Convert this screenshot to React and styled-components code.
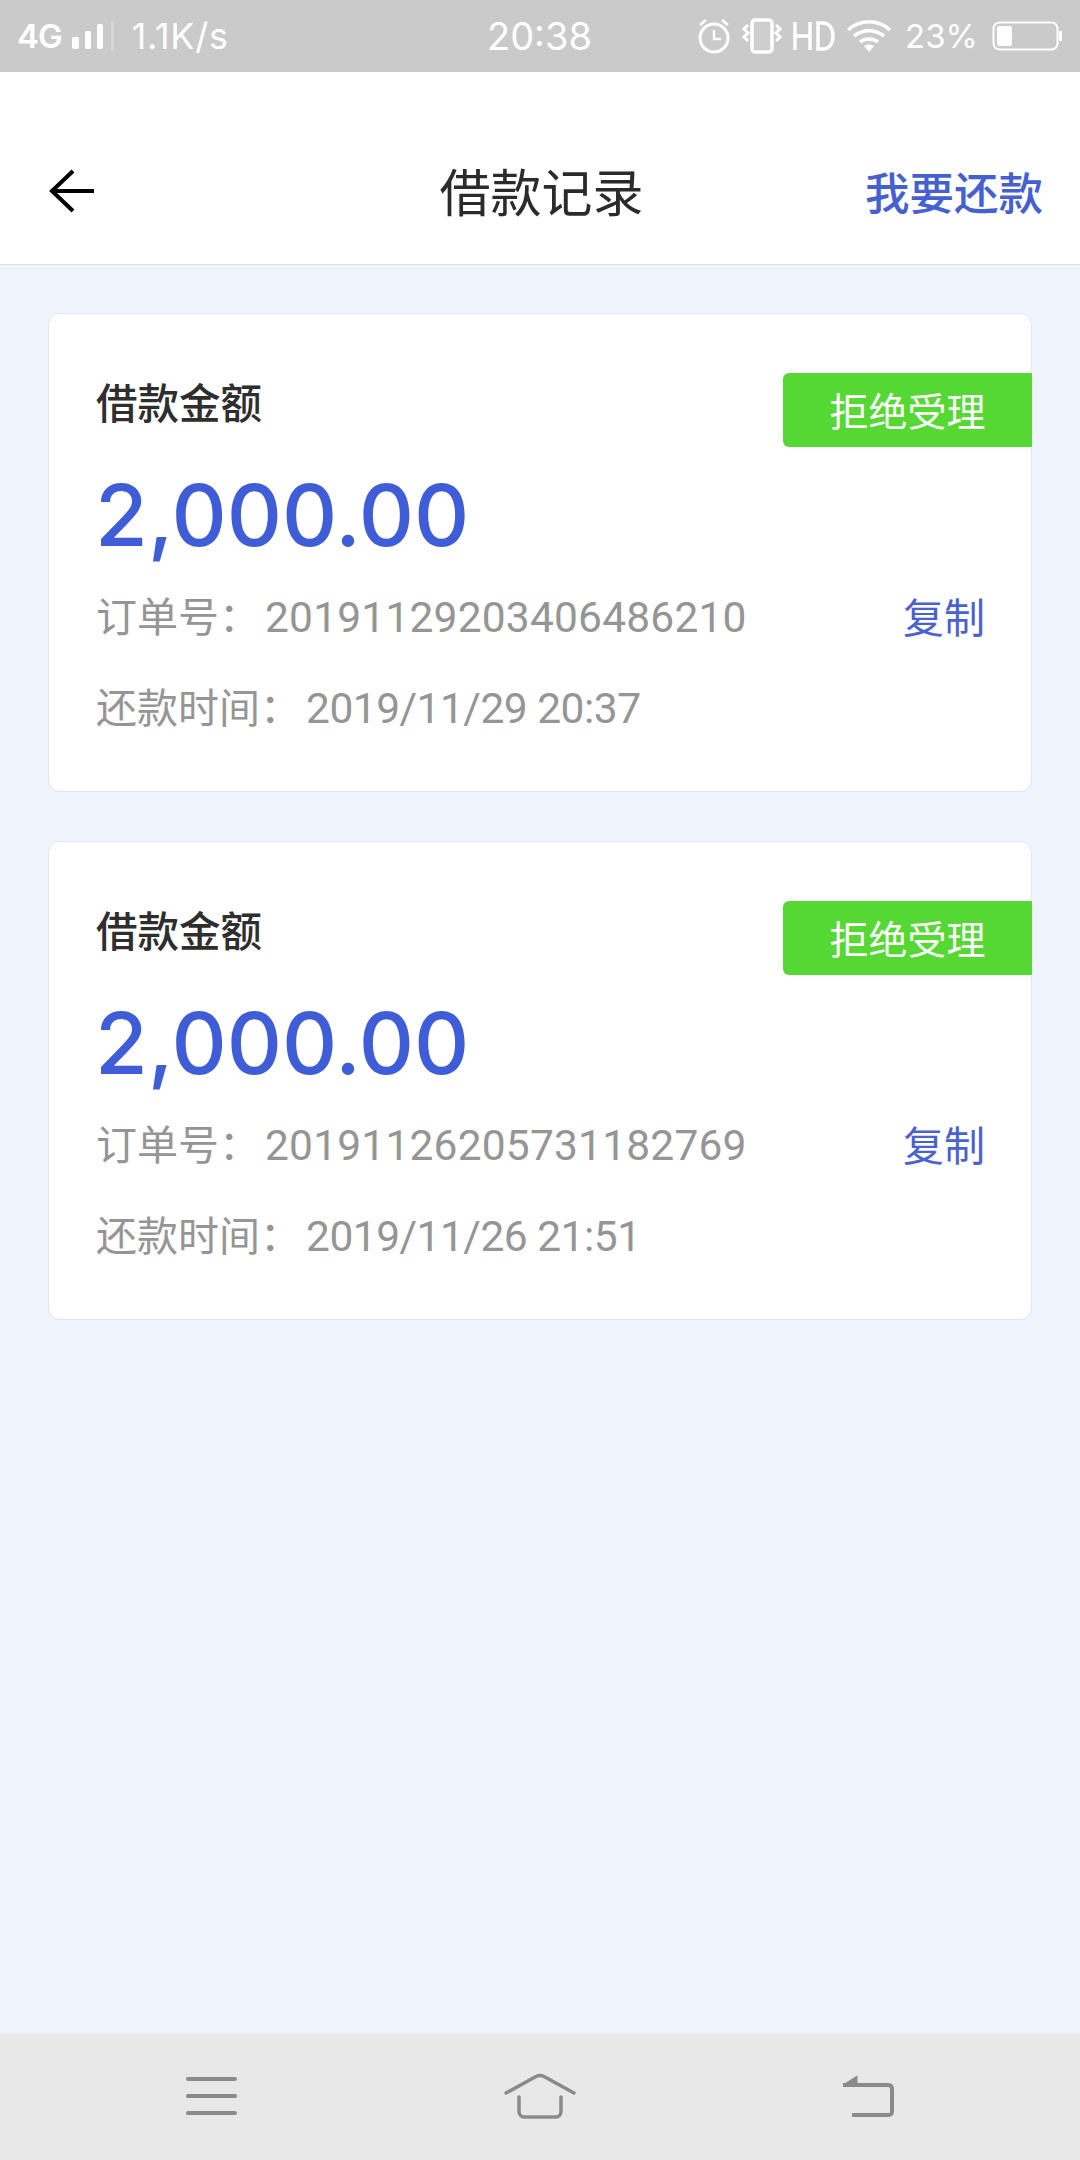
import React from 'react';
import styled, { createGlobalStyle } from 'styled-components';

const GlobalStyle = createGlobalStyle`
	html, body {
		margin: 0;
		padding: 0;
		background: #f0f4fc;
	}
	* {
		box-sizing: border-box;
	}
`;

const Page = styled.div`
	display: flex;
	flex-direction: column;
	width: 1080px;
	height: 2160px;
	overflow: hidden;
	background: #f0f4fc;
	font-family: Inter, 'Noto Sans CJK SC', sans-serif;
`;

const StatusBar = styled.div`
	display: grid;
	grid-template-columns: 1fr auto 1fr;
	align-items: center;
	height: 72px;
	padding: 0 18px 0 17px;
	background: #cacaca;
	color: #fff;
`;

const StatusLeft = styled.div`
	display: flex;
	align-items: center;
`;

const StatusRight = styled.div`
	display: flex;
	align-items: center;
	justify-content: flex-end;
`;

const NetworkType = styled.span`
	font-size: 33px;
	font-weight: 600;
	letter-spacing: -1px;
`;

const NetworkSpeed = styled.span`
	margin-left: 11px;
	font-size: 36px;
	letter-spacing: 0.7px;
`;

const Clock = styled.span`
	font-size: 38px;
`;

const Percent = styled.span`
	margin: 0 14px 0 13px;
	font-size: 33px;
`;

const StatusIcon = styled.svg`
	display: block;
	flex: none;
	margin-left: ${(p) => p.$gap || 0}px;
`;

const NavBar = styled.header`
	display: grid;
	grid-template-columns: 1fr auto 1fr;
	align-items: center;
	height: 193px;
	padding: 44px 37px 0 40px;
	background: #fff;
	border-bottom: 1px solid #dcdfe6;
`;

const BackButton = styled.svg`
	display: block;
	margin: 2px 0 0 9px;
`;

const Title = styled.h1`
	margin: 0;
	font-size: 51px;
	font-weight: 400;
	color: #2b2b2b;
`;

const ActionLink = styled.a`
	justify-self: end;
	font-size: 44.5px;
	font-weight: 500;
	color: #4560d0;
`;

const List = styled.main`
	display: flex;
	flex: 1;
	flex-direction: column;
	gap: 49px;
	padding: 48px 48px 0;
`;

const Card = styled.section`
	position: relative;
	height: 479px;
	padding: 60px 46px 0 47px;
	background: #fff;
	border: 1px solid #e1e5ec;
	border-radius: 12px;
`;

const Badge = styled.div`
	position: absolute;
	top: 59px;
	right: -1px;
	width: 249px;
	height: 74px;
	border-radius: 6px 0 0 6px;
	background: #55d833;
	color: #fff;
	font-size: 39px;
	line-height: 78px;
	text-align: center;
`;

const Label = styled.div`
	font-size: 41.5px;
	font-weight: 500;
	line-height: 60px;
	color: #2e2e2e;
`;

const Amount = styled.div`
	margin: 31px 0 0 -1px;
	font-size: 85.7px;
	font-weight: 500;
	line-height: 100px;
	color: #3f5dd6;
`;

const InfoRow = styled.div`
	display: flex;
	align-items: center;
	justify-content: space-between;
	margin-top: ${(p) => p.$top}px;
	font-size: 41px;
	line-height: 60px;
	color: #959595;
`;

const InfoValue = styled.span`
	margin-left: 5px;
	font-family: Roboto, sans-serif;
	font-size: 42.5px;
	letter-spacing: ${(p) => p.$spacing}px;
`;

const CopyLink = styled.a`
	color: #4a62d0;
	font-size: 41px;
`;

const BottomBar = styled.nav`
	display: flex;
	align-items: center;
	justify-content: space-between;
	height: 127px;
	padding: 0 186px 2px;
	background: #e8e8e8;
`;

const NavIcon = styled.svg`
	display: block;
	fill: none;
	stroke: #8a8a8a;
`;

const records = [
	{ amount: '2,000.00', order: '20191129203406486210', time: '2019/11/29 20:37' },
	{ amount: '2,000.00', order: '20191126205731182769', time: '2019/11/26 21:51' },
];

function Record({ amount, order, time }) {
	return (
		<Card>
			<Badge>拒绝受理</Badge>
			<Label>借款金额</Label>
			<Amount>{amount}</Amount>
			<InfoRow $top={22}>
				<span>
					订单号：<InfoValue $spacing={0.2}>{order}</InfoValue>
				</span>
				<CopyLink>复制</CopyLink>
			</InfoRow>
			<InfoRow $top={30}>
				<span>
					还款时间：<InfoValue $spacing={-0.5}>{time}</InfoValue>
				</span>
			</InfoRow>
		</Card>
	);
}

export default function App() {
	return (
		<Page>
			<GlobalStyle />
			<StatusBar>
				<StatusLeft>
					<NetworkType>4G</NetworkType>
					<StatusIcon $gap={9} width="50" height="30" viewBox="0 0 50 30" fill="#fff">
						<rect x="1" y="16" width="7" height="12" rx="2" />
						<rect x="14" y="10" width="6" height="18" rx="2" />
						<rect x="26" y="3" width="6" height="25" rx="2" />
						<rect x="40" y="0" width="3" height="30" fill="#fff" opacity="0.25" />
					</StatusIcon>
					<NetworkSpeed>1.1K/s</NetworkSpeed>
				</StatusLeft>
				<Clock>20:38</Clock>
				<StatusRight>
					<StatusIcon width="34" height="36" viewBox="0 0 34 36" fill="none" stroke="#fff" strokeWidth="3">
						<circle cx="17" cy="20" r="14" />
						<path d="M17 12v9h7M3 7l6-5M31 7l-6-5" strokeWidth="2.5" />
					</StatusIcon>
					<StatusIcon $gap={10} width="42" height="36" viewBox="0 0 42 36" fill="none" stroke="#fff" strokeWidth="3.5">
						<rect x="11" y="2" width="20" height="32" rx="3" fill="#fff" fillOpacity="0.08" />
						<path d="M7 7l-4 4 4 4-4 4 4 4M35 7l4 4-4 4 4 4-4 4" strokeWidth="3" />
					</StatusIcon>
					<StatusIcon $gap={10} width="42" height="30" viewBox="0 0 42 30" fill="none" stroke="#fff" strokeWidth="3.5">
						<path d="M2 1v28M17 1v28M2 15h15M25 2h5c6 0 10 5 10 13s-4 13-10 13h-5z" />
					</StatusIcon>
					<StatusIcon $gap={11} width="46" height="34" viewBox="0 0 46 34" fill="none" stroke="#fff" strokeWidth="3.5">
						<path d="M2 11c12-11 30-11 42 0M8 17c9-7 21-7 30 0M14 23c5-4 13-4 18 0" />
						<path d="M18 27c3-2 7-2 10 0l-5 6z" fill="#fff" stroke="none" />
					</StatusIcon>
					<Percent>23%</Percent>
					<StatusIcon width="70" height="30" viewBox="0 0 70 30" fill="none">
						<rect x="1.5" y="1.5" width="64" height="27" rx="6" stroke="#fff" strokeWidth="2" />
						<rect x="5" y="5" width="15" height="20" rx="2" fill="#fff" />
						<rect x="67" y="10" width="3" height="10" fill="#fff" />
					</StatusIcon>
				</StatusRight>
			</StatusBar>
			<NavBar>
				<BackButton width="46" height="44" viewBox="0 0 46 44" fill="none" stroke="#000" strokeWidth="4">
					<path d="M45 22H4M24 2L3 22l21 20" />
				</BackButton>
				<Title>借款记录</Title>
				<ActionLink>我要还款</ActionLink>
			</NavBar>
			<List>
				{records.map((r) => (
					<Record key={r.order} {...r} />
				))}
			</List>
			<BottomBar>
				<NavIcon width="51" height="40" viewBox="0 0 51 40" strokeWidth="4" strokeLinecap="round">
					<path d="M2 3h47M2 20h47M2 37h47" />
				</NavIcon>
				<NavIcon width="72" height="46" viewBox="0 0 72 46" strokeWidth="3.5" strokeLinecap="round" strokeLinejoin="round">
					<path d="M2 20L32 3.5c2.5-1.3 5.5-1.3 8 0L70 20" />
					<path d="M15 24v14c0 3 2 6 5 6h32c3 0 5-3 5-6V24" />
				</NavIcon>
				<NavIcon width="52" height="44" viewBox="0 0 52 44" strokeWidth="4">
					<path d="M1 11h45c3 0 4 2 4 4v22c0 3-1 4-4 4H10" />
					<path d="M1 11L15 2v9z" fill="#8a8a8a" strokeWidth="1" />
				</NavIcon>
			</BottomBar>
		</Page>
	);
}
